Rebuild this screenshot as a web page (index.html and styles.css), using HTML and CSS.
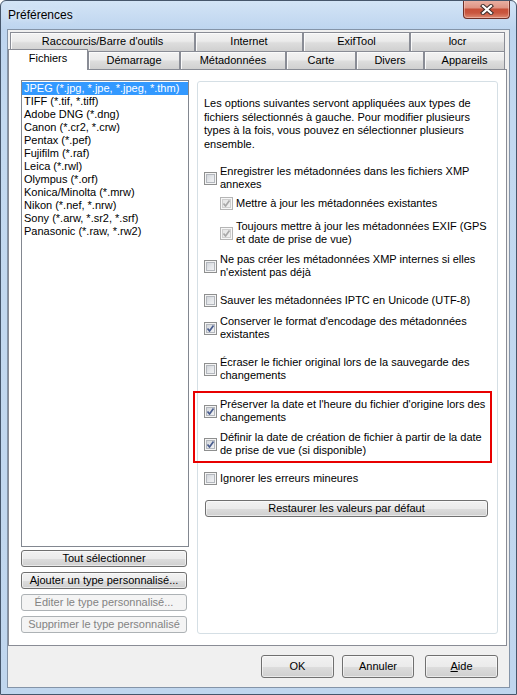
FILE: index.html
```html
<!DOCTYPE html>
<html lang="fr">
<head>
<meta charset="utf-8">
<title>Préférences</title>
<link rel="stylesheet" href="styles.css">
</head>
<body>
<div class="window">
  <div class="titlebar">
    <span class="title">Préférences</span>
    <div class="close">
      <svg width="14" height="11" viewBox="0 0 14 11"><path class="xo" d="M3 2 11 9M11 2 3 9"/><path class="xi" d="M3 2 11 9M11 2 3 9"/></svg>
    </div>
  </div>
  <div class="client">
    <div class="tabs">
      <div class="tabrow row1">
        <div class="tab w185">Raccourcis/Barre d'outils</div>
        <div class="tab w108">Internet</div>
        <div class="tab w107">ExifTool</div>
        <div class="tab w95">locr</div>
      </div>
      <div class="tabrow row2">
        <div class="tab sel w80">Fichiers</div>
        <div class="tab w92">Démarrage</div>
        <div class="tab w106">Métadonnées</div>
        <div class="tab w70">Carte</div>
        <div class="tab w68">Divers</div>
        <div class="tab w81">Appareils</div>
      </div>
    </div>
    <div class="panel">
      <div class="leftcol">
        <div class="listbox">
          <div class="item selected">JPEG (*.jpg, *.jpe, *.jpeg, *.thm)</div>
          <div class="item">TIFF (*.tif, *.tiff)</div>
          <div class="item">Adobe DNG (*.dng)</div>
          <div class="item">Canon (*.cr2, *.crw)</div>
          <div class="item">Pentax (*.pef)</div>
          <div class="item">Fujifilm (*.raf)</div>
          <div class="item">Leica (*.rwl)</div>
          <div class="item">Olympus (*.orf)</div>
          <div class="item">Konica/Minolta (*.mrw)</div>
          <div class="item">Nikon (*.nef, *.nrw)</div>
          <div class="item">Sony (*.arw, *.sr2, *.srf)</div>
          <div class="item">Panasonic (*.raw, *.rw2)</div>
        </div>
        <button class="btn side first">Tout sélectionner</button>
        <button class="btn side">Ajouter un type personnalisé...</button>
        <button class="btn side disabled">Éditer le type personnalisé...</button>
        <button class="btn side disabled">Supprimer le type personnalisé</button>
      </div>
      <div class="group">
        <p class="intro">Les options suivantes servont appliquées aux types de<br>fichiers sélectionnés à gauche. Pour modifier plusieurs<br>types à la fois, vous pouvez en sélectionner plusieurs<br>ensemble.</p>
        <div class="opt m14"><span class="cb"></span><span class="lbl">Enregistrer les métadonnées dans les fichiers XMP<br>annexes</span></div>
        <div class="opt sub m6"><span class="cb on dis"><svg viewBox="0 0 11 11"><path d="M2.5 5.5 4.5 8 8.5 2.5"/></svg></span><span class="lbl dimtext">Mettre à jour les métadonnées existantes</span></div>
        <div class="opt sub m10"><span class="cb on dis"><svg viewBox="0 0 11 11"><path d="M2.5 5.5 4.5 8 8.5 2.5"/></svg></span><span class="lbl dimtext">Toujours mettre à jour les métadonnées EXIF (GPS<br>et date de prise de vue)</span></div>
        <div class="opt m7"><span class="cb"></span><span class="lbl">Ne pas créer les métadonnées XMP internes si elles<br>n'existent pas déjà</span></div>
        <div class="opt m15"><span class="cb"></span><span class="lbl">Sauver les métadonnées IPTC en Unicode (UTF-8)</span></div>
        <div class="opt m8"><span class="cb on"><svg viewBox="0 0 11 11"><path d="M2.5 5.5 4.5 8 8.5 2.5"/></svg></span><span class="lbl">Conserver le format d'encodage des métadonnées<br>existantes</span></div>
        <div class="opt m15"><span class="cb"></span><span class="lbl">Écraser le fichier original lors de la sauvegarde des<br>changements</span></div>
        <div class="highlight">
          <div class="opt"><span class="cb on"><svg viewBox="0 0 11 11"><path d="M2.5 5.5 4.5 8 8.5 2.5"/></svg></span><span class="lbl">Préserver la date et l'heure du fichier d'origine lors des<br>changements</span></div>
          <div class="opt m7"><span class="cb on"><svg viewBox="0 0 11 11"><path d="M2.5 5.5 4.5 8 8.5 2.5"/></svg></span><span class="lbl">Définir la date de création de fichier à partir de la date<br>de prise de vue (si disponible)</span></div>
        </div>
        <div class="opt m9"><span class="cb"></span><span class="lbl">Ignorer les erreurs mineures</span></div>
        <button class="btn reset">Restaurer les valeurs par défaut</button>
      </div>
    </div>
    <div class="footer">
      <button class="btn foot ok">OK</button>
      <button class="btn foot cancel">Annuler</button>
      <button class="btn foot help"><span class="ul">A</span>ide</button>
    </div>
  </div>
</div>
</body>
</html>
```

FILE: styles.css
```css
* { box-sizing: border-box; }
html, body { margin: 0; padding: 0; background: #fff; }
body {
  font-family: "Liberation Sans", Arial, sans-serif;
  font-size: 11px;
  line-height: 13px;
  color: #000;
}

.window {
  width: 517px;
  height: 695px;
  border: 1px solid #46566b;
  border-radius: 6px 6px 0 0;
  background: linear-gradient(180deg, #d3e4f6 0px, #bed5ef 28px, #c3d9f0 120px, #c0d6ee 100%);
  padding: 0 6px 6px 6px;
  display: flex;
  flex-direction: column;
  overflow: hidden;
}

.titlebar {
  height: 28px;
  flex: none;
  display: flex;
  align-items: center;
  justify-content: space-between;
  padding-left: 1px;
}
.title {
  font-size: 12px;
  line-height: 16px;
  color: #000;
  text-shadow: 0 0 6px #eef6ff;
}
.close {
  align-self: flex-start;
  margin-top: -1px;
  width: 47px;
  height: 19px;
  border: 1px solid #6e3028;
  border-top: none;
  border-radius: 0 0 4px 4px;
  background: linear-gradient(180deg, #eab3a6 0%, #df9585 42%, #c75039 52%, #c9563f 72%, #dd8a72 100%);
  box-shadow: inset 0 0 0 1px rgba(255, 220, 210, 0.45);
  display: flex;
  align-items: center;
  justify-content: center;
}
.close svg { display: block; }
.close .xo { fill: none; stroke: #3f2e2c; stroke-width: 4.2; stroke-linecap: square; }
.close .xi { fill: none; stroke: #fff; stroke-width: 2.2; stroke-linecap: square; }

.client {
  flex: 1;
  border: 1px solid #8494a8;
  background: #f0f0f0;
  padding-top: 2px;
  display: flex;
  flex-direction: column;
}

.tabs {
  height: 37px;
  flex: none;
  display: flex;
  flex-direction: column;
}
.tabrow { display: flex; margin-left: 2px; }
.row1 { height: 19px; }
.row2 { height: 18px; }
.tab {
  flex: none;
  border: 1px solid #898c95;
  border-bottom: none;
  background: linear-gradient(180deg, #f3f3f3 0%, #ebebeb 45%, #dddddd 55%, #d0d0d0 100%);
  box-shadow: inset 1px 1px 0 #fbfbfb;
  text-align: center;
  white-space: nowrap;
}
.row1 .tab { height: 19px; line-height: 17px; }
.row2 .tab { height: 18px; line-height: 16px; }
.tab.sel {
  margin-left: -2px;
  margin-top: -2px;
  height: 21px;
  line-height: 16px;
  background: #fff;
  box-shadow: none;
  position: relative;
  z-index: 1;
}
.w185 { width: 185px; }
.w108 { width: 108px; }
.w107 { width: 107px; }
.w95 { width: 95px; }
.w80 { width: 80px; }
.w92 { width: 92px; }
.w106 { width: 106px; }
.w70 { width: 70px; }
.w68 { width: 68px; }
.w81 { width: 81px; }

.panel {
  flex: none;
  width: 499px;
  height: 577px;
  border: 1px solid #898c95;
  background: #fff;
  display: flex;
  align-items: flex-start;
  padding: 10px 0 0 12px;
}

.leftcol {
  width: 168px;
  flex: none;
  display: flex;
  flex-direction: column;
}
.listbox {
  height: 467px;
  border: 1px solid #828790;
  padding-top: 1px;
  overflow: hidden;
}
.item {
  height: 13px;
  line-height: 13px;
  padding-left: 2px;
  white-space: nowrap;
  overflow: hidden;
}
.item.selected {
  background: #3399ff;
  color: #fff;
}

.btn {
  display: block;
  font-family: inherit;
  font-size: 11px;
  line-height: 13px;
  color: #000;
  padding: 0;
  margin: 0;
  border: 1px solid #707070;
  border-radius: 3px;
  background: linear-gradient(180deg, #f2f2f2 0%, #ebebeb 50%, #dddddd 51%, #cfcfcf 100%);
  box-shadow: inset 0 0 0 1px rgba(255, 255, 255, 0.55);
  text-align: center;
  white-space: nowrap;
}
.btn.side { width: 166px; height: 17px; margin-top: 5px; }
.btn.side.first { margin-top: 3px; }
.btn.disabled {
  border-color: #adb2b5;
  background: #f4f4f4;
  box-shadow: none;
  color: #838383;
}

.group {
  flex: none;
  width: 301px;
  height: 553px;
  margin: 1px 0 0 8px;
  border: 1px solid #d5dfe5;
  border-radius: 3px;
  padding: 15px 0 0 6px;
}
.intro {
  margin: 0;
  line-height: 13.5px;
  white-space: nowrap;
}

.opt {
  display: flex;
  align-items: center;
}
.sub { margin-left: 16px; }
.lbl { white-space: nowrap; line-height: 13px; }
.dimtext { color: #000; }

.cb {
  flex: none;
  width: 13px;
  height: 13px;
  margin-right: 3px;
  border: 1px solid #8e8f8f;
  background: linear-gradient(135deg, #c9cdd3 0%, #e6e8eb 55%, #f8f8f8 100%);
  box-shadow: inset 0 0 0 1px #f4f4f4, inset 0 0 0 2px #b3b7bd;
  display: flex;
}
.cb svg { width: 11px; height: 11px; display: block; }
.cb path { fill: none; stroke: #4a5d8e; stroke-width: 1.7; stroke-linejoin: round; }
.cb.dis {
  border-color: #b5b5b5;
  background: linear-gradient(135deg, #e3e3e3 0%, #f3f3f3 100%);
  box-shadow: inset 0 0 0 1px #f7f7f7, inset 0 0 0 2px #cfcfcf;
}
.cb.dis path { stroke: #a8a8a8; }

.m6 { margin-top: 6px; }
.m7 { margin-top: 7px; }
.m8 { margin-top: 8px; }
.m9 { margin-top: 9px; }
.m10 { margin-top: 10px; }
.m14 { margin-top: 14px; }
.m15 { margin-top: 15px; }

.highlight {
  margin: 9px 0 0 -11px;
  width: 299px;
  border: 2px solid #e80000;
  padding: 5px 0 4px 9px;
}

.btn.reset {
  width: 283px;
  height: 17px;
  margin: 15px 0 0 1px;
}

.footer {
  flex: 1;
  display: flex;
  justify-content: flex-end;
  align-items: flex-start;
  padding: 9px 11px 0 0;
}
.btn.foot { height: 23px; }
.ok { width: 73px; }
.cancel { width: 72px; margin-left: 8px; }
.help { width: 73px; margin-left: 11px; }
.ul { text-decoration: underline; }
```
